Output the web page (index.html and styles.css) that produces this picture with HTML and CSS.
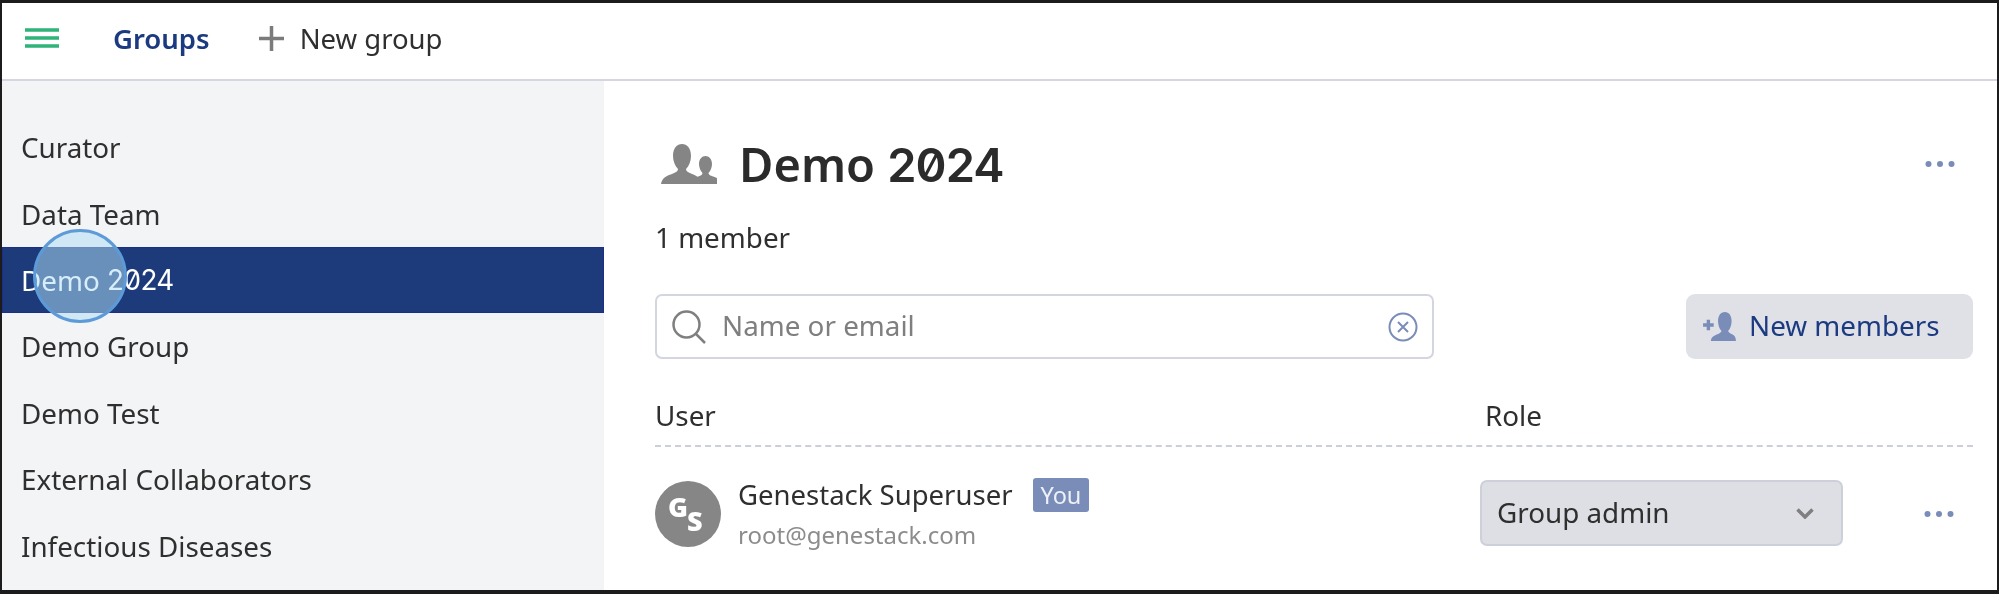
FILE: index.html
```html
<!DOCTYPE html>
<html lang="en">
<head>
<meta charset="utf-8">
<title>Groups</title>
<link rel="stylesheet" href="styles.css">
</head>
<body>
<div class="app">
  <header class="topbar">
    <svg class="burger" viewBox="0 0 34 20" aria-hidden="true"><path d="M0 2h34M0 10h34M0 18h34"/></svg>
    <a class="top-title">Groups</a>
    <a class="top-action">
      <svg class="plus" viewBox="0 0 25 25" aria-hidden="true"><path d="M12.5 0v25M0 12.500h25"/></svg>
      <span>New group</span>
    </a>
  </header>
  <div class="content">
    <nav class="sidebar">
      <a class="nav-item">Curator</a>
      <a class="nav-item">Data Team</a>
      <a class="nav-item nav-item-active">Demo&nbsp;<span class="digits">2024</span></a>
      <a class="nav-item">Demo Group</a>
      <a class="nav-item">Demo Test</a>
      <a class="nav-item">External Collaborators</a>
      <a class="nav-item">Infectious Diseases</a>
    </nav>
    <main class="main">
      <div class="title-row">
        <svg class="group-icon" viewBox="0 0 56 40" aria-hidden="true">
          <path d="M0 40c1-6 5-8 11-10 4-1.500 6-3 6-5-3-3-5-8-5-13C12 4 16 0 21 0s9 4 9 12c0 5-2 10-5 13 0 2 2 3.500 6 5 2 .7 4 1.600 5.500 2.800 3-1 5-2 5-3.800-2-2-3.500-5.500-3.500-9 0-5 3-8 6.500-8s6.500 3 6.500 8c0 3.500-1.500 7-3.500 9 0 2 3 3 6 4 3 1.200 5.500 3 6.500 7z"/>
        </svg>
        <h1 class="title">Demo <span class="digits">2024</span></h1>
        <svg class="dots dots-title" viewBox="0 0 30 8" aria-hidden="true"><circle cx="3.500" cy="4" r="3"/><circle cx="15" cy="4" r="3"/><circle cx="26.500" cy="4" r="3"/></svg>
      </div>
      <p class="count">1 member</p>
      <div class="toolbar">
        <div class="search">
          <svg class="search-icon" viewBox="0 0 34 34" aria-hidden="true"><circle cx="14.500" cy="14.500" r="13"/><path d="M24 24l9 9"/></svg>
          <span class="placeholder">Name or email</span>
          <svg class="clear-icon" viewBox="0 0 30 30" aria-hidden="true"><circle cx="15" cy="15" r="13.500"/><path d="M10 10l10 10M20 10L10 20"/></svg>
        </div>
        <button class="btn-new">
          <svg class="add-icon" viewBox="0 0 34 30" aria-hidden="true">
            <path class="add-plus" d="M0 13.500h11M5.500 8v11"/>
            <path class="add-user" d="M8 30c.5-4 3-5.500 7-7 2.500-1 4-2 4-3.500-2-2-3.500-6-3.500-10C15.500 4 18 0 22.500 0s7 4 7 9.500c0 4-1.500 8-3.500 10 0 1.500 1.500 2.500 4 3.500 2.500 1 4 3 4 7z"/>
          </svg>
          <span>New members</span>
        </button>
      </div>
      <div class="table-head">
        <span>User</span>
        <span>Role</span>
      </div>
      <div class="member">
        <div class="user">
          <div class="avatar"><span class="avatar-g">G</span><span class="avatar-s">S</span></div>
          <div class="user-text">
            <div class="user-line"><span class="user-name">Genestack Superuser</span><span class="badge">You</span></div>
            <div class="user-mail">root@genestack.com</div>
          </div>
        </div>
        <div class="role-select">
          <span>Group admin</span>
          <svg class="chevron" viewBox="0 0 18 11" aria-hidden="true"><path d="M1.500 1.500L9 9l7.500-7.500"/></svg>
        </div>
        <svg class="dots dots-row" viewBox="0 0 30 8" aria-hidden="true"><circle cx="3.500" cy="4" r="3"/><circle cx="15" cy="4" r="3"/><circle cx="26.500" cy="4" r="3"/></svg>
      </div>
    </main>
  </div>
  <div class="cursor-spot"></div>
</div>
</body>
</html>
```
FILE: styles.css
```css
* { box-sizing: border-box; }
html, body { margin: 0; height: 100%; background: #fff; overflow: hidden; }
body { font-family: "Noto Sans", Roboto, sans-serif; font-size: 27.800px; color: #2f2f2f; }

.app {
  position: relative;
  display: flex;
  flex-direction: column;
  width: 1999px;
  height: 594px;
  border-style: solid;
  border-color: #1c1c1c;
  border-width: 3px 2px 4px 2px;
  overflow: hidden;
  filter: blur(.5px);
}

.topbar {
  display: flex;
  align-items: center;
  flex: none;
  height: 78px;
  padding-left: 23px;
  padding-bottom: 6px;
  border-bottom: 2px solid #d4d6e0;
}
.burger { width: 34px; height: 20px; }
.burger path { fill: none; stroke: #2fb37a; stroke-width: 3.500; }
.top-title { margin-left: 54px; font-weight: 600; font-size: 27.500px; color: #1c3a80; }
.top-action { display: flex; align-items: center; margin-left: 49px; font-size: 27.500px; }
.plus { width: 25px; height: 25px; margin-right: 16px; }
.plus path { fill: none; stroke: #7b7b7b; stroke-width: 3.500; }

.content { display: flex; flex: 1; min-height: 0; }

.sidebar {
  flex: none;
  width: 602px;
  padding-top: 33px;
  background: #f3f4f6;
}
.nav-item {
  display: flex;
  align-items: center;
  height: 66.4px;
  padding-left: 19px;
}
.nav-item-active {
  background: #1d3b7b;
  box-shadow: inset 0 0 0 1px #1b2f86;
  color: #fff;
}
.digits { font-family: Inter, Roboto, sans-serif; font-feature-settings: "zero"; letter-spacing: -.02em; }

.main { flex: 1; min-width: 0; padding: 48px 24px 0 51px; }

.title-row { display: flex; align-items: center; height: 70px; }
.group-icon { width: 56px; height: 40px; margin-left: 6px; margin-right: 22px; }
.group-icon path { fill: #858585; }
.title { margin: 0; font-size: 47px; font-weight: 600; line-height: 70px; color: #2b2b2b; }
.dots { width: 30px; height: 8px; }
.dots circle { fill: #7a8cb8; }
.dots-title { margin-left: auto; margin-right: 18px; }

.count { margin: 22px 0 0; line-height: 32px; }

.toolbar { display: flex; justify-content: space-between; height: 65px; margin-top: 41px; }
.search {
  display: flex;
  align-items: center;
  width: 779px;
  padding: 0 14px 0 15px;
  border: 2px solid #d3d5df;
  border-radius: 7px;
}
.search-icon { width: 34px; height: 34px; margin-right: 16px; }
.search-icon circle, .search-icon path { fill: none; stroke: #7f7f7f; stroke-width: 2.500; }
.placeholder { flex: 1; padding-bottom: 4px; color: #7f7f7f; }
.clear-icon { width: 30px; height: 30px; }
.clear-icon circle, .clear-icon path { fill: none; stroke: #7a8cb8; stroke-width: 2; }

.btn-new {
  display: flex;
  align-items: center;
  width: 287px;
  padding: 0 0 4px 17px;
  border: 0;
  border-radius: 9px;
  background: #dfe1e7;
  color: #1c3a80;
  font: inherit;
}
.add-icon { width: 33px; height: 29px; margin-top: 4px; margin-right: 13px; }
.add-plus { fill: none; stroke: #7a8cb8; stroke-width: 3.500; }
.add-user { fill: #7a8cb8; }

.table-head {
  display: grid;
  grid-template-columns: 830px 1fr;
  align-items: end;
  height: 88px;
  padding-bottom: 14px;
  border-bottom: 2px dashed #ccced8;
  line-height: 32px;
}

.member { display: flex; align-items: flex-start; margin-top: 34px; }
.user { display: flex; width: 825px; }
.avatar {
  position: relative;
  flex: none;
  width: 66px;
  height: 66px;
  border-radius: 50%;
  background: #868686;
  color: #fff;
  font-weight: 900;
  font-size: 27px;
  line-height: 34px;
}
.avatar-g { position: absolute; left: 13px; top: 9px; }
.avatar-s { position: absolute; left: 32px; top: 23px; }
.user-text { margin-left: 17px; }
.user-line { display: flex; align-items: flex-start; height: 34px; margin-top: -3px; }
.user-name { line-height: 34px; font-size: 27.500px; }
.badge {
  margin-left: 20px;
  padding: 0 8px;
  height: 34px;
  line-height: 34px;
  border-radius: 3px;
  background: #7a8cb8;
  color: #eef1f7;
  font-size: 23.500px;
}
.user-mail { margin-top: 7px; font-size: 24px; line-height: 32px; color: #8c8c8c; }

.role-select {
  display: flex;
  align-items: center;
  justify-content: space-between;
  width: 363px;
  height: 66px;
  margin-top: -1px;
  padding: 0 27px 2px 15px;
  border: 2px solid #cdd0d8;
  border-radius: 7px;
  background: #dddfe4;
}
.chevron { width: 18px; height: 11px; margin-top: 2px; }
.chevron path { fill: none; stroke: #7f7f7f; stroke-width: 3.500; }
.dots-row { margin-left: 81px; margin-top: 29px; }

.cursor-spot {
  position: absolute;
  left: 31px;
  top: 226px;
  width: 94px;
  height: 94px;
  border: 3px solid #5c9bd8;
  border-radius: 50%;
  background: rgba(176, 221, 245, .52);
}
```
